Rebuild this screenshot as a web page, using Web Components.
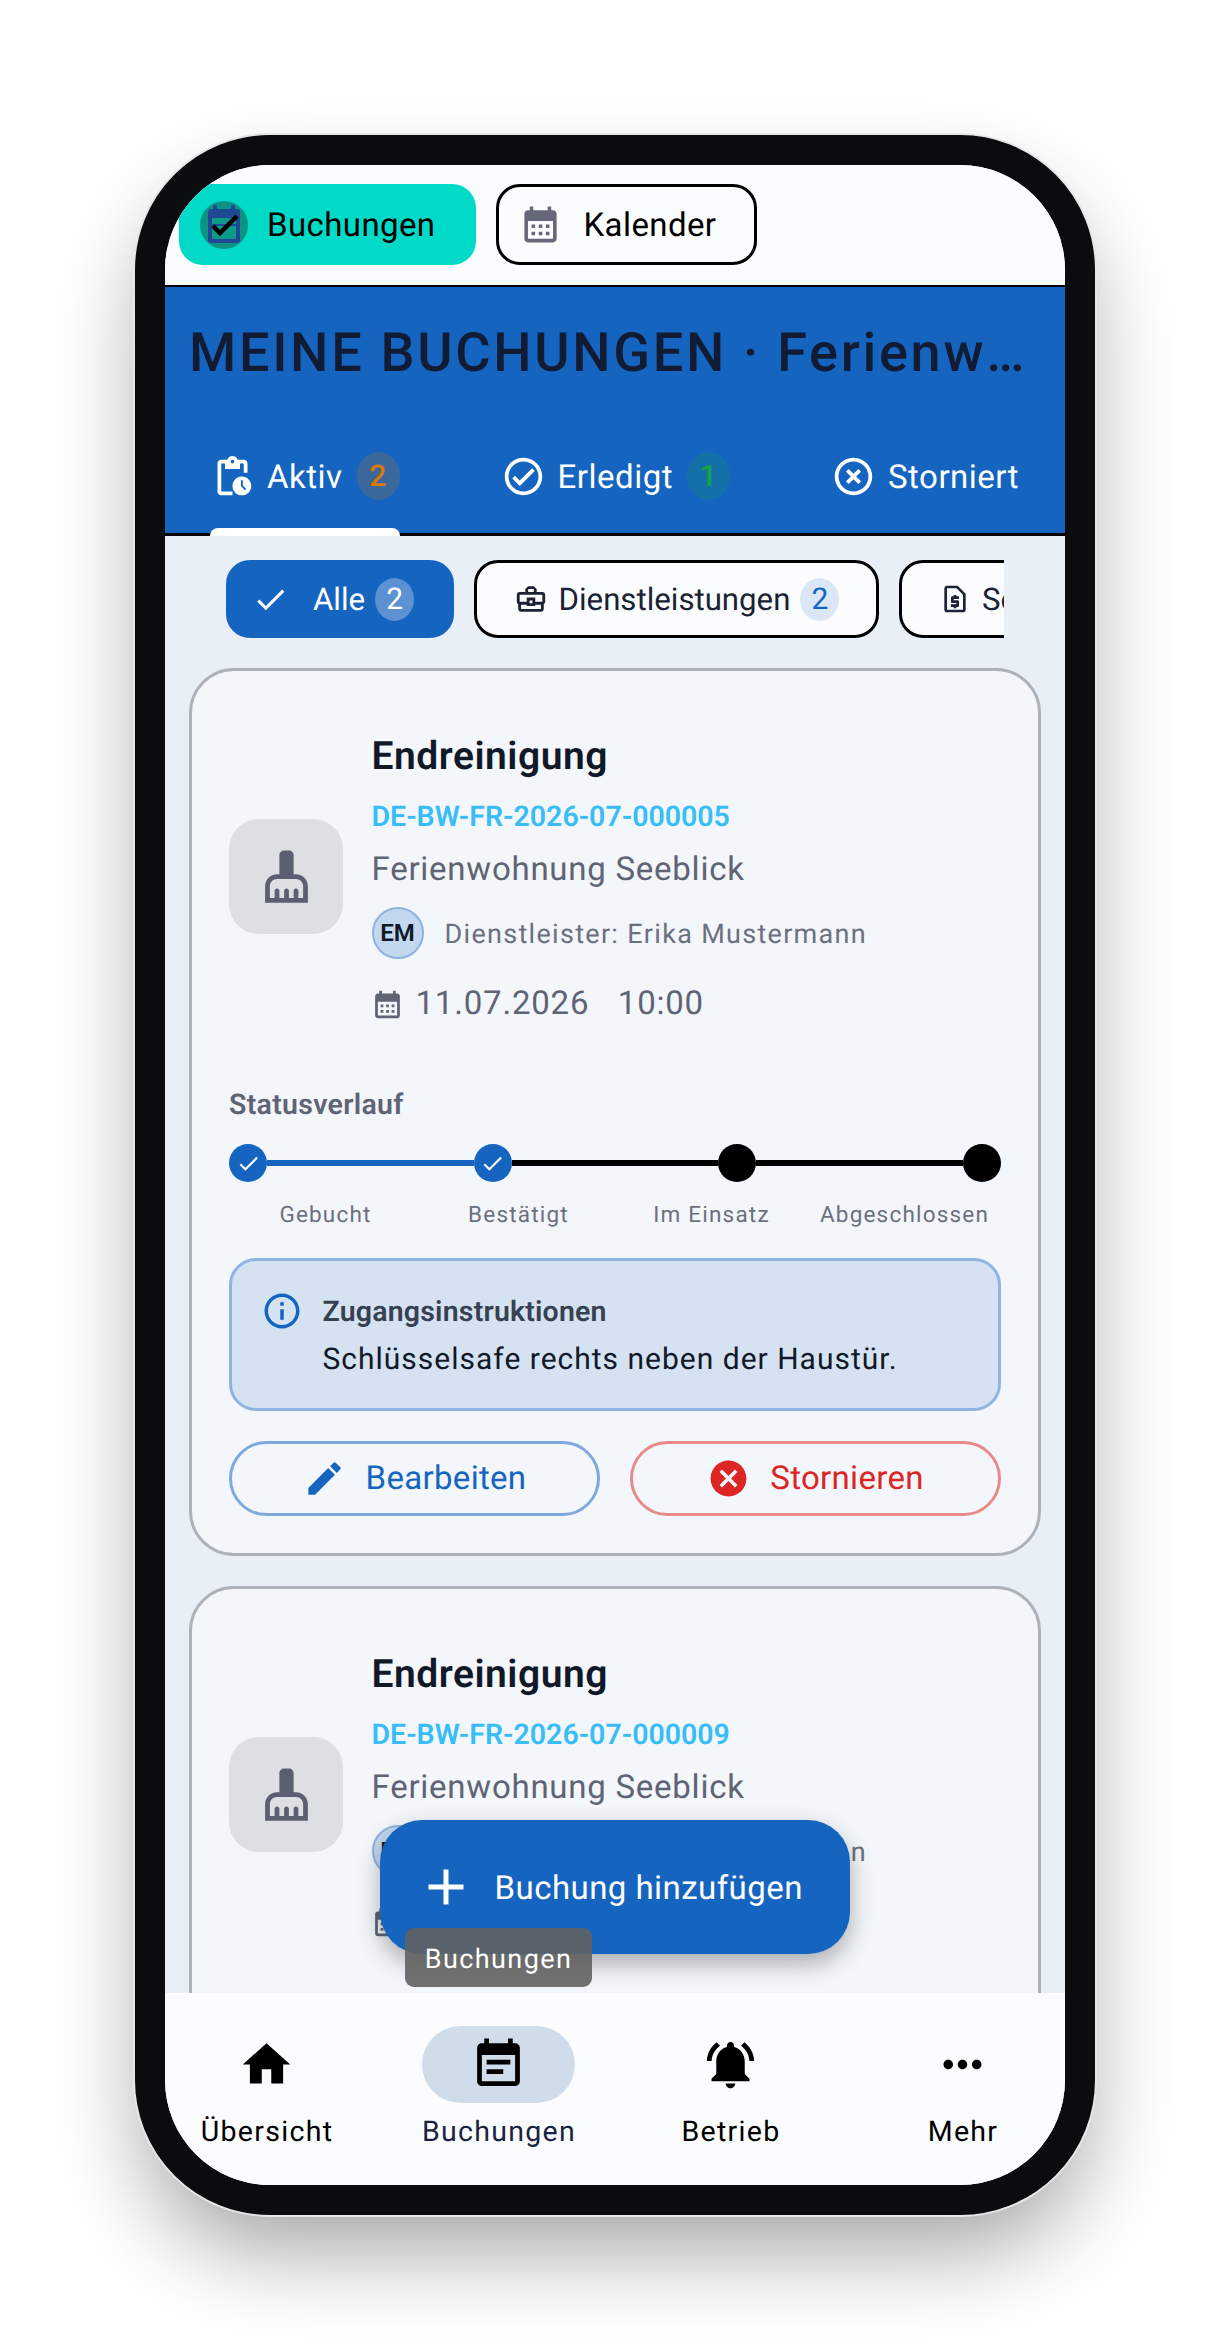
<!DOCTYPE html>
<html lang="de">
<head>
<meta charset="utf-8">
<title>Meine Buchungen</title>
<style>
  html, body { margin: 0; height: 100%; overflow: hidden; background: #fff; }
  body { font-family: Roboto, "Liberation Sans", sans-serif; color: #0f172a; text-rendering: geometricPrecision; }
</style>
</head>
<body>
<phone-frame>
  <top-bar>
    <top-chip active label="Buchungen"></top-chip>
    <top-chip label="Kalender" icon="calendar"></top-chip>
  </top-bar>

  <page-header heading="MEINE BUCHUNGEN · Ferienwohnung Seeblick">
    <status-tab icon="pending" label="Aktiv" count="2" tone="#d97706" selected></status-tab>
    <status-tab icon="done" label="Erledigt" count="1" tone="#16a34a"></status-tab>
    <status-tab icon="off" label="Storniert"></status-tab>
  </page-header>

  <booking-list>
    <filter-row>
      <filter-chip active icon="check" icon-size="37" gap="24" label="Alle" count="2"></filter-chip>
      <filter-chip icon="case" icon-size="34" gap="11" label="Dienstleistungen" count="2"></filter-chip>
      <filter-chip icon="quote" icon-size="32" gap="11" label="Sonstige"></filter-chip>
    </filter-row>
    <booking-card code="DE-BW-FR-2026-07-000005"></booking-card>
    <booking-card code="DE-BW-FR-2026-07-000009" collapsed></booking-card>
  </booking-list>

  <bottom-nav>
    <nav-item icon="home" label="Übersicht"></nav-item>
    <nav-item icon="note" label="Buchungen" active></nav-item>
    <nav-item icon="bell" label="Betrieb"></nav-item>
    <nav-item icon="more" label="Mehr"></nav-item>
  </bottom-nav>

  <add-fab label="Buchung hinzufügen"></add-fab>
  <nav-tooltip>Buchungen</nav-tooltip>
</phone-frame>

<script>
const ICONS = {
  calendar: "M19 4h-1V2h-2v2H8V2H6v2H5c-1.1 0-2 .9-2 2v14c0 1.1.9 2 2 2h14c1.1 0 2-.9 2-2V6c0-1.1-.9-2-2-2zm0 16H5V10h14v10zM9 14H7v-2h2v2zm4 0h-2v-2h2v2zm4 0h-2v-2h2v2zm-8 4H7v-2h2v2zm4 0h-2v-2h2v2zm4 0h-2v-2h2v2z",
  pending: "M17 12c-2.76 0-5 2.24-5 5s2.24 5 5 5 5-2.24 5-5-2.24-5-5-5zm1.65 7.35L16.5 17.2V14h1v2.79l1.85 1.85-.7.71zM18 3h-3.18C14.4 1.84 13.3 1 12 1s-2.4.84-2.82 2H6c-1.1 0-2 .9-2 2v15c0 1.1.9 2 2 2h6v-2H6V5h2v3h8V5h2v5h2V5c0-1.1-.9-2-2-2zm-6 2c-.55 0-1-.45-1-1s.45-1 1-1 1 .45 1 1-.45 1-1 1z",
  done: "M12 2C6.48 2 2 6.48 2 12s4.48 10 10 10 10-4.48 10-10S17.52 2 12 2zm0 18c-4.41 0-8-3.59-8-8s3.59-8 8-8 8 3.59 8 8-3.59 8-8 8zm4.59-12.42L10 14.17l-2.59-2.58L6 13l4 4 8-8z",
  off: "M14.59 8L12 10.59 9.41 8 8 9.41 10.59 12 8 14.59 9.41 16 12 13.41 14.59 16 16 14.59 13.41 12 16 9.41 14.59 8zM12 2C6.47 2 2 6.47 2 12s4.47 10 10 10 10-4.47 10-10S17.53 2 12 2zm0 18c-4.41 0-8-3.59-8-8s3.59-8 8-8 8 3.59 8 8-3.59 8-8 8z",
  check: "M9 16.17L4.83 12l-1.42 1.41L9 19 21 7l-1.41-1.41z",
  case: "M20 7h-4V5l-2-2h-4L8 5v2H4c-1.1 0-2 .9-2 2v5c0 .75.4 1.38 1 1.73V19c0 1.11.89 2 2 2h14c1.11 0 2-.89 2-2v-3.28c.59-.35 1-.99 1-1.72V9c0-1.1-.9-2-2-2zM10 5h4v2h-4V5zM4 9h16v5h-5v-3H9v3H4V9zm9 6h-2v-2h2v2zm6 4H5v-3h4v1h6v-1h4v3z",
  quote: "M14 2H6c-1.1 0-1.99.9-1.99 2L4 20c0 1.1.89 2 1.99 2H18c1.1 0 2-.9 2-2V8l-6-6zm4 18H6V4h7.17L18 8.83V20zM11 19h2v-1h1c.55 0 1-.45 1-1v-3c0-.55-.45-1-1-1h-3v-1h4v-2h-2V9h-2v1h-1c-.55 0-1 .45-1 1v3c0 .55.45 1 1 1h3v1H9v2h2v1z",
  broom: "M16 11h-1V3c0-1.1-.9-2-2-2h-2c-1.1 0-2 .9-2 2v8H8c-2.76 0-5 2.24-5 5v7h18v-7c0-2.76-2.24-5-5-5zm3 10h-2v-3c0-.55-.45-1-1-1s-1 .45-1 1v3h-2v-3c0-.55-.45-1-1-1s-1 .45-1 1v3H9v-3c0-.55-.45-1-1-1s-1 .45-1 1v3H5v-5c0-1.65 1.35-3 3-3h8c1.65 0 3 1.35 3 3v5z",
  info: "M11 7h2v2h-2zm0 4h2v6h-2zm1-9C6.48 2 2 6.48 2 12s4.48 10 10 10 10-4.48 10-10S17.52 2 12 2zm0 18c-4.41 0-8-3.59-8-8s3.59-8 8-8 8 3.59 8 8-3.59 8-8 8z",
  edit: "M3 17.25V21h3.75L17.81 9.94l-3.75-3.75L3 17.25zM20.71 7.04c.39-.39.39-1.02 0-1.41l-2.34-2.34c-.39-.39-1.02-.39-1.41 0l-1.83 1.83 3.75 3.75 1.83-1.83z",
  cancel: "M12 2C6.47 2 2 6.47 2 12s4.47 10 10 10 10-4.47 10-10S17.53 2 12 2zm5 13.59L15.59 17 12 13.41 8.41 17 7 15.59 10.59 12 7 8.41 8.41 7 12 10.59 15.59 7 17 8.41 13.41 12 17 15.59z",
  add: "M19 13h-6v6h-2v-6H5v-2h6V5h2v6h6v2z",
  home: "M10 20v-6h4v6h5v-8h3L12 3 2 12h3v8z",
  note: "M17 10H7v2h10v-2zm2-7h-1V1h-2v2H8V1H6v2H5c-1.11 0-1.99.9-1.99 2L3 19c0 1.1.89 2 2 2h14c1.1 0 2-.9 2-2V5c0-1.1-.9-2-2-2zm0 16H5V8h14v11zm-5-5H7v2h7v-2z",
  bell: "M7.58 4.08L6.15 2.65C3.75 4.48 2.17 7.3 2.03 10.5h2c.15-2.65 1.51-4.97 3.55-6.42zm12.39 6.42h2c-.15-3.2-1.73-6.02-4.12-7.85l-1.42 1.43c2.02 1.45 3.39 3.77 3.54 6.42zM18 11c0-3.07-1.64-5.64-4.5-6.32V4c0-.83-.67-1.5-1.5-1.5s-1.5.67-1.5 1.5v.68C7.63 5.36 6 7.92 6 11v5l-2 2v1h16v-1l-2-2v-5zm-6 11c.14 0 .27-.01.4-.04.65-.14 1.18-.58 1.44-1.18.1-.24.15-.5.15-.78h-4c.01 1.1.9 2 2.01 2z",
  more: "M6 10c-1.1 0-2 .9-2 2s.9 2 2 2 2-.9 2-2-.9-2-2-2zm12 0c-1.1 0-2 .9-2 2s.9 2 2 2 2-.9 2-2-.9-2-2-2zm-6 0c-1.1 0-2 .9-2 2s.9 2 2 2 2-.9 2-2-.9-2-2-2z",
}

const icon = (name, size, color = "currentColor") =>
  `<svg width="${size}" height="${size}" viewBox="0 0 24 24" fill="${color}" style="display:block;flex:none"><path d="${ICONS[name]}"/></svg>`

class PhoneFrame extends HTMLElement {
  constructor() {
    super()
    this.attachShadow({ mode: "open" })
    this.shadowRoot.innerHTML = `
      <style>
        :host { display: block; box-sizing: border-box; width: 960px; height: 2080px; margin: 135px auto 0; border: 30px solid #0b0c0e; border-radius: 135px; box-shadow: 0 0 0 2px #e6e7e9, 0 45px 90px -10px rgba(0,0,0,.36); background: #0b0c0e; }
        .screen { position: relative; display: flex; flex-direction: column; height: 100%; overflow: hidden; border-radius: 105px; background: #fbfcfe; }
      </style>
      <div class="screen"><slot></slot></div>`
  }
}

class TopBar extends HTMLElement {
  constructor() {
    super()
    this.attachShadow({ mode: "open" })
    this.shadowRoot.innerHTML = `
      <style>
        :host { display: flex; flex: none; gap: 20px; box-sizing: border-box; height: 122px; padding: 19px 0 0 14px; border-bottom: 2px solid #000; background: #fbfcfe; }
      </style>
      <slot></slot>`
  }
}

class TopChip extends HTMLElement {
  constructor() {
    super()
    this.attachShadow({ mode: "open" })
  }
  connectedCallback() {
    const active = this.hasAttribute("active")
    const lead = active
      ? `<span class="badge"><svg width="48" height="48" viewBox="0 0 48 48">
           <path d="M13 4h4v4h14V4h4v4h2a3 3 0 0 1 3 3v28a3 3 0 0 1-3 3H11a3 3 0 0 1-3-3V11a3 3 0 0 1 3-3h2z" fill="#1f4a93"/>
           <rect x="12" y="17" width="24" height="21" fill="#0d9a88"/>
           <rect x="12" y="23" width="24" height="2" fill="#1f4a93"/>
           <path d="M13 25l7 7 17-17" fill="none" stroke="#000" stroke-width="4.5"/>
         </svg></span>`
      : icon(this.getAttribute("icon"), 43, "#646878")
    this.shadowRoot.innerHTML = `
      <style>
        :host { display: flex; align-items: center; box-sizing: border-box; height: 81px; border-radius: 24px; font-size: 33px; letter-spacing: .4px; color: #000; }
        :host([active]) { width: 297px; padding-left: 21px; gap: 19px; background: #00dac6; }
        :host(:not([active])) { width: 261px; padding-left: 20px; gap: 21.5px; border: 3px solid #000; }
        .badge { display: block; width: 48px; height: 48px; border-radius: 50%; background: #0b9383; flex: none; }
        .text { padding-top: 2px; }
      </style>
      ${lead}<span class="text">${this.getAttribute("label")}</span>`
  }
}

class PageHeader extends HTMLElement {
  constructor() {
    super()
    this.attachShadow({ mode: "open" })
    this.shadowRoot.innerHTML = `
      <style>
        :host { display: block; flex: none; box-sizing: border-box; height: 249px; padding-top: 27px; border-bottom: 3px solid #000; background: #1565c0; }
        h1 { margin: 0 30px 0 24px; font-size: 54px; line-height: 80px; font-weight: 500; letter-spacing: 2.7px; color: #111b33; white-space: nowrap; overflow: hidden; text-overflow: ellipsis; }
        .tabs { display: flex; gap: 101px; margin-top: 58px; padding-left: 45px; }
      </style>
      <h1></h1>
      <div class="tabs"><slot></slot></div>`
  }
  connectedCallback() {
    this.shadowRoot.querySelector("h1").textContent = this.getAttribute("heading")
  }
}

class StatusTab extends HTMLElement {
  constructor() {
    super()
    this.attachShadow({ mode: "open" })
  }
  connectedCallback() {
    const count = this.getAttribute("count")
    const tone = this.getAttribute("tone")
    this.shadowRoot.innerHTML = `
      <style>
        :host { position: relative; display: flex; flex: none; align-items: center; height: 48px; padding-bottom: 33px; gap: 12px; font-size: 33px; letter-spacing: .5px; color: #fff; white-space: nowrap; }
        :host([selected])::after { content: ""; position: absolute; left: 0; right: 0; bottom: -3px; height: 8px; border-radius: 9px 9px 0 0; background: #fff; }
        .text { padding-top: 2px; }
        .count { position: relative; display: flex; align-items: center; justify-content: center; width: 43px; height: 48px; margin-left: 2px; border-radius: 50%; font-size: 30px; font-weight: 500; }
        .count::before { content: ""; position: absolute; inset: 0; border-radius: 50%; background: var(--tone); opacity: .2; }
      </style>
      ${icon(this.getAttribute("icon"), 45)}
      <span class="text">${this.getAttribute("label")}</span>
      ${count ? `<span class="count" style="--tone:${tone};color:${tone}">${count}</span>` : ""}`
  }
}

class BookingList extends HTMLElement {
  constructor() {
    super()
    this.attachShadow({ mode: "open" })
    this.shadowRoot.innerHTML = `
      <style>
        :host { display: flex; flex-direction: column; flex: 1; min-height: 0; gap: 30px; padding: 24px 24px 0; overflow: hidden; background: #e8eff7; }
      </style>
      <slot></slot>`
  }
}

class FilterRow extends HTMLElement {
  constructor() {
    super()
    this.attachShadow({ mode: "open" })
    this.shadowRoot.innerHTML = `
      <style>
        :host { display: flex; flex: none; gap: 19.5px; margin: 0 37px 0 22px; padding-left: 15px; overflow: hidden; }
      </style>
      <slot></slot>`
  }
}

class FilterChip extends HTMLElement {
  constructor() {
    super()
    this.attachShadow({ mode: "open" })
  }
  connectedCallback() {
    const count = this.getAttribute("count")
    this.shadowRoot.innerHTML = `
      <style>
        :host { display: flex; flex: none; align-items: center; box-sizing: border-box; height: 78px; padding: 0 37px 0 ${this.hasAttribute("active") ? 23 : 37}px; gap: ${this.getAttribute("gap")}px; border: 3px solid #000; border-radius: 24px; background: #fbfcfe; color: #1a2233; font-size: 31.2px; white-space: nowrap; }
        :host([active]) { border-color: #1565c0; background: #1565c0; color: #fff; }
        .count { display: flex; align-items: center; justify-content: center; width: 39px; height: 43px; margin-left: calc(10px - ${this.getAttribute("gap")}px); border-radius: 50%; background: #dbe7f6; color: #1565c0; font-size: 30px; }
        :host([active]) .count { background: #5c91d3; color: #fff; }
      </style>
      ${icon(this.getAttribute("icon"), this.getAttribute("icon-size"))}
      <span>${this.getAttribute("label")}</span>
      ${count ? `<span class="count">${count}</span>` : ""}`
  }
}

class StatusStepper extends HTMLElement {
  constructor() {
    super()
    this.attachShadow({ mode: "open" })
    this.shadowRoot.innerHTML = `
      <style>
        :host { display: block; }
        .head { height: 42px; line-height: 42px; font-size: 28.5px; font-weight: 600; letter-spacing: .3px; color: #5f6475; }
        .track { display: flex; align-items: center; margin-top: 18px; }
        .dot { display: flex; align-items: center; justify-content: center; width: 38px; height: 38px; border-radius: 50%; background: #000; flex: none; }
        .dot.done { background: #1565c0; }
        .line { flex: 1; height: 6px; background: #000; }
        .line.done { background: #1565c0; }
        .labels { display: grid; grid-template-columns: repeat(4, 1fr); margin-top: 17px; margin-bottom: -1px; font-size: 22.5px; line-height: 32px; letter-spacing: 1.2px; color: #6b7080; text-align: center; }
      </style>
      <div class="head">Statusverlauf</div>
      <div class="track">
        <span class="dot done">${icon("check", 25, "#fff")}</span><span class="line done"></span>
        <span class="dot done">${icon("check", 25, "#fff")}</span><span class="line"></span>
        <span class="dot"></span><span class="line"></span>
        <span class="dot"></span>
      </div>
      <div class="labels"><span>Gebucht</span><span>Bestätigt</span><span>Im Einsatz</span><span>Abgeschlossen</span></div>`
  }
}

class InfoNote extends HTMLElement {
  constructor() {
    super()
    this.attachShadow({ mode: "open" })
    this.shadowRoot.innerHTML = `
      <style>
        :host { display: flex; box-sizing: border-box; height: 153.5px; margin-top: 27.5px; padding: 30px 0 0 28.5px; gap: 20px; border: 3px solid #8fb4e0; border-radius: 27px; background: #d4e2f2; }
        svg { margin-top: -1px; }
        b { display: block; font-size: 28.5px; line-height: 42px; font-weight: 600; letter-spacing: .2px; color: #374151; }
        span { display: block; margin-top: 6px; font-size: 30px; line-height: 42px; letter-spacing: 1px; color: #111827; }
      </style>
      ${icon("info", 42, "#1565c0")}
      <div><b><slot name="title"></slot></b><span><slot></slot></span></div>`
  }
}

class ActionButton extends HTMLElement {
  constructor() {
    super()
    this.attachShadow({ mode: "open" })
  }
  connectedCallback() {
    const color = this.getAttribute("color")
    this.shadowRoot.innerHTML = `
      <style>
        :host { display: flex; flex: 1; align-items: center; justify-content: center; box-sizing: border-box; height: 75px; gap: ${this.getAttribute("gap")}px; border: 3px solid ${this.getAttribute("border")}; border-radius: 38px; font-size: 33px; letter-spacing: .3px; color: ${color}; }
      </style>
      ${icon(this.getAttribute("icon"), 43, color)}<span>${this.getAttribute("label")}</span>`
  }
}

class BookingCard extends HTMLElement {
  constructor() {
    super()
    this.attachShadow({ mode: "open" })
  }
  connectedCallback() {
    // the second card is cut off by the nav, only its head part is on screen
    const details = this.hasAttribute("collapsed") ? "" : `
      <status-stepper></status-stepper>
      <info-note><span slot="title">Zugangsinstruktionen</span>Schlüsselsafe rechts neben der Haustür.</info-note>
      <div class="actions">
        <action-button icon="edit" label="Bearbeiten" color="#1565c0" border="#7fa8dc" gap="20"></action-button>
        <action-button icon="cancel" label="Stornieren" color="#dc2626" border="#e88a8a" gap="20"></action-button>
      </div>`
    this.shadowRoot.innerHTML = `
      <style>
        :host { display: block; flex: none; box-sizing: border-box; height: 888px; padding: 55px 37px 0; border: 3px solid #adb2ba; border-radius: 45px; background: #f3f6fa; }
        .top { display: flex; align-items: center; gap: 28.5px; }
        .thumb { display: flex; align-items: center; justify-content: center; width: 114px; height: 115px; border-radius: 30px; background: #dcdfe4; flex: none; }
        h2 { margin: 1.5px 0 0; font-size: 39px; line-height: 57px; font-weight: 600; letter-spacing: .5px; color: #111827; }
        .code { margin-top: 11px; font-size: 28.5px; line-height: 42px; font-weight: 600; color: #38bdf8; }
        .place { margin-top: 9px; font-size: 33px; line-height: 46px; letter-spacing: .75px; color: #5f6475; }
        .person { display: flex; align-items: center; gap: 21px; margin-top: 14.5px; font-size: 27px; letter-spacing: 1.3px; color: #6b7080; }
        .person .who { padding-top: 2px; }
        .avatar { display: flex; align-items: center; justify-content: center; box-sizing: border-box; width: 52px; height: 52px; border: 2px solid #8eb3df; border-radius: 50%; background: #c3d8ee; color: #0f172a; font-size: 24px; font-weight: 600; letter-spacing: 0; }
        .date { display: flex; align-items: center; margin: 22px 0 -1px; font-size: 33px; line-height: 46px; letter-spacing: .8px; color: #5f6475; }
        .date svg { margin: 0 12px 0 -1px; }
        .date span + span { margin-left: 28.5px; }
        status-stepper { margin-top: 58px; }
        .actions { display: flex; gap: 30px; margin-top: 30px; }
      </style>
      <div class="top">
        <div class="thumb">${icon("broom", 57, "#5a6070")}</div>
        <div>
          <h2>Endreinigung</h2>
          <div class="code">${this.getAttribute("code")}</div>
          <div class="place">Ferienwohnung Seeblick</div>
          <div class="person"><span class="avatar">EM</span><span class="who">Dienstleister: Erika Mustermann</span></div>
          <div class="date">${icon("calendar", 33, "#5f6475")}<span>11.07.2026</span><span>10:00</span></div>
        </div>
      </div>${details}`
  }
}

class BottomNav extends HTMLElement {
  constructor() {
    super()
    this.attachShadow({ mode: "open" })
    this.shadowRoot.innerHTML = `
      <style>
        :host { display: grid; flex: none; grid-template-columns: repeat(4, 232px); justify-content: center; height: 192px; background: #fbfcfe; }
      </style>
      <slot></slot>`
  }
}

class NavItem extends HTMLElement {
  constructor() {
    super()
    this.attachShadow({ mode: "open" })
  }
  connectedCallback() {
    this.shadowRoot.innerHTML = `
      <style>
        :host { display: flex; flex-direction: column; align-items: center; padding-top: 33px; font-size: 28.5px; letter-spacing: 1.3px; color: #000; }
        :host([active]) { color: #1a2440; }
        .pill { display: flex; align-items: center; justify-content: center; width: 153px; height: 77px; margin-left: -1.5px; border-radius: 39px; color: #000; }
        :host([active]) .pill { background: #d0dcea; }
        .label { margin-top: 8.5px; line-height: 40px; }
      </style>
      <span class="pill">${icon(this.getAttribute("icon"), 57)}</span>
      <span class="label">${this.getAttribute("label")}</span>`
  }
}

class AddFab extends HTMLElement {
  constructor() {
    super()
    this.attachShadow({ mode: "open" })
  }
  connectedCallback() {
    this.shadowRoot.innerHTML = `
      <style>
        :host { position: absolute; left: 215px; top: 1655px; display: flex; align-items: center; box-sizing: border-box; width: 470px; height: 134px; padding-left: 36px; gap: 18.5px; border-radius: 42px; background: #1565c0; color: #fff; font-size: 33px; letter-spacing: .45px; box-shadow: 0 10px 24px rgba(0,0,0,.3); }
        span { padding-top: 2px; }
      </style>
      ${icon("add", 60)}<span>${this.getAttribute("label")}</span>`
  }
}

class NavTooltip extends HTMLElement {
  constructor() {
    super()
    this.attachShadow({ mode: "open" })
    this.shadowRoot.innerHTML = `
      <style>
        :host { position: absolute; left: 240px; top: 1763px; display: flex; align-items: center; justify-content: center; box-sizing: border-box; width: 187px; height: 59px; padding-top: 2px; border-radius: 9px; background: rgba(97,97,97,.9); color: #fff; font-size: 27px; letter-spacing: 1.4px; }
      </style>
      <slot></slot>`
  }
}

customElements.define("phone-frame", PhoneFrame)
customElements.define("top-bar", TopBar)
customElements.define("top-chip", TopChip)
customElements.define("page-header", PageHeader)
customElements.define("status-tab", StatusTab)
customElements.define("booking-list", BookingList)
customElements.define("filter-row", FilterRow)
customElements.define("filter-chip", FilterChip)
customElements.define("status-stepper", StatusStepper)
customElements.define("info-note", InfoNote)
customElements.define("action-button", ActionButton)
customElements.define("booking-card", BookingCard)
customElements.define("bottom-nav", BottomNav)
customElements.define("nav-item", NavItem)
customElements.define("add-fab", AddFab)
customElements.define("nav-tooltip", NavTooltip)
</script>
</body>
</html>
